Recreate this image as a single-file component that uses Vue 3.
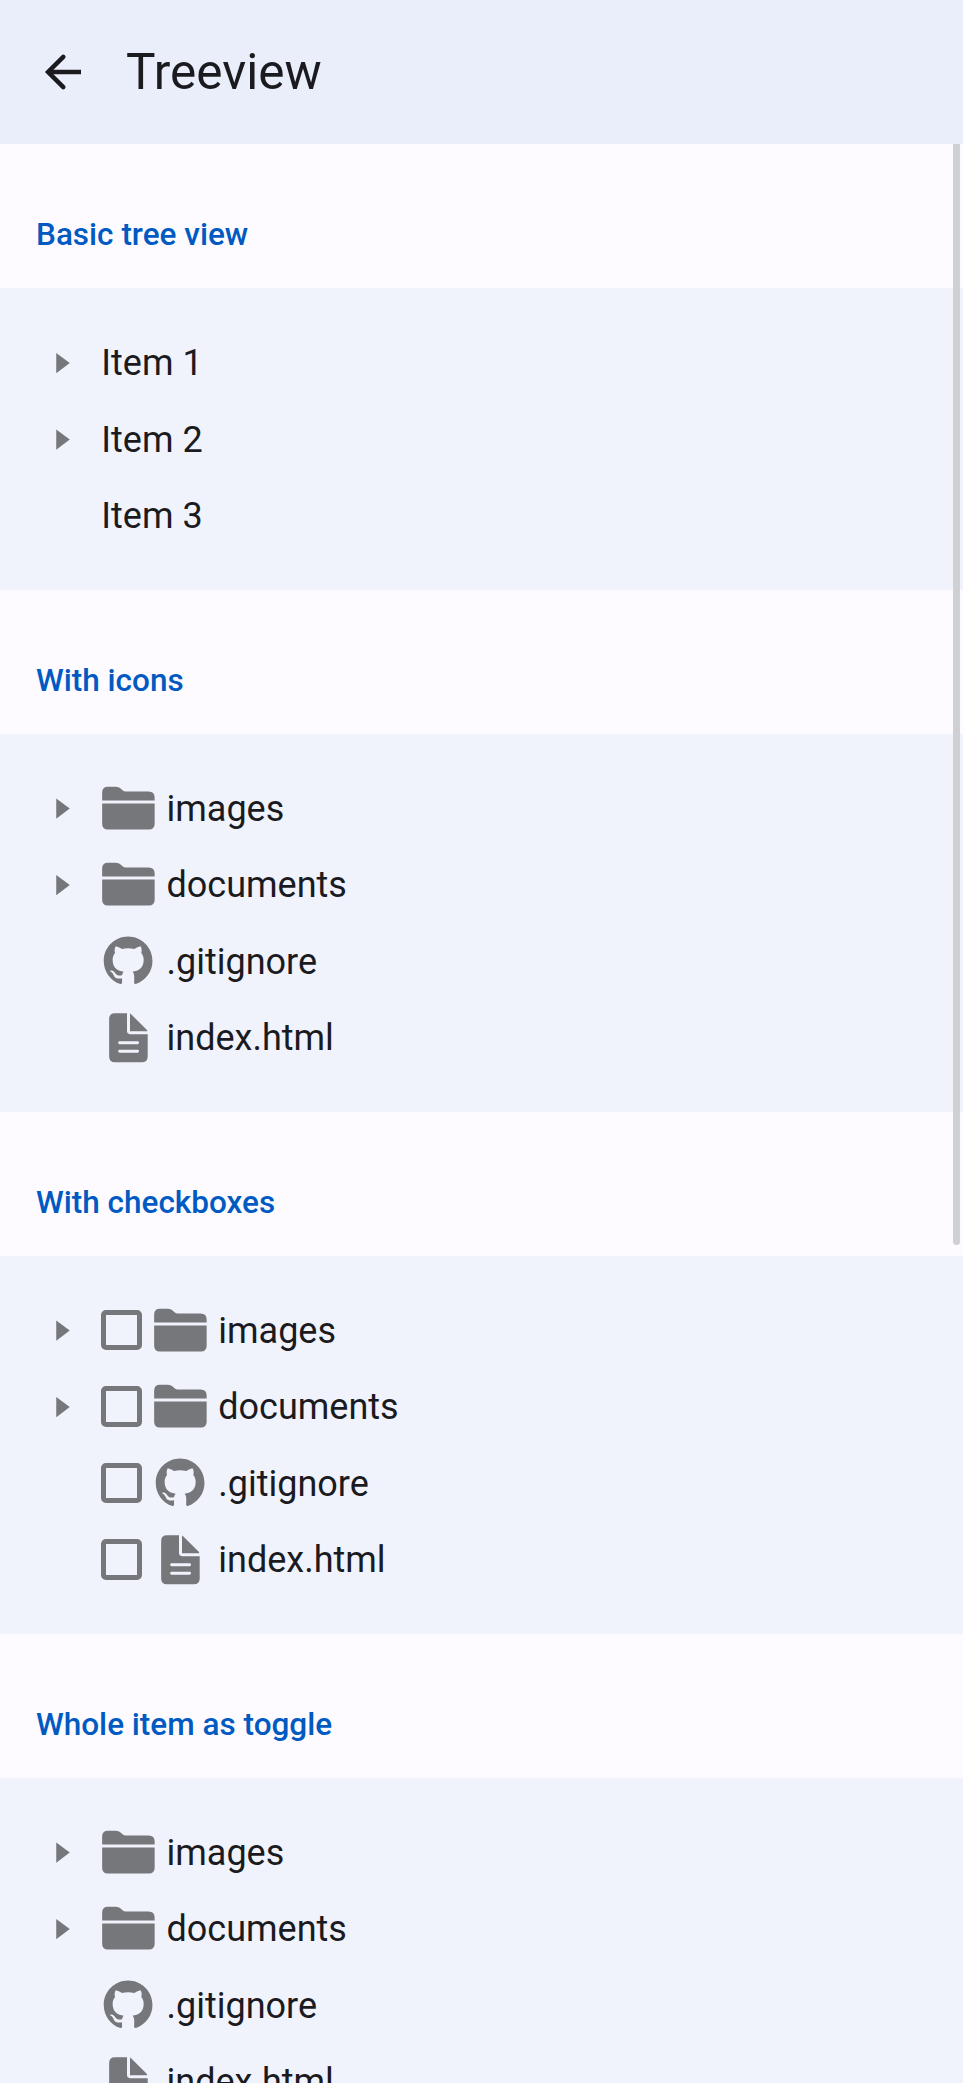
<script setup>
const files = [
  { label: 'images', icon: 'folder', toggle: true },
  { label: 'documents', icon: 'folder', toggle: true },
  { label: '.gitignore', icon: 'github' },
  { label: 'index.html', icon: 'file' },
]

const sections = [
  {
    title: 'Basic tree view',
    items: [
      { label: 'Item 1', toggle: true },
      { label: 'Item 2', toggle: true },
      { label: 'Item 3' },
    ],
  },
  { title: 'With icons', items: files },
  { title: 'With checkboxes', items: files, checkbox: true },
  { title: 'Whole item as toggle', items: files },
]
</script>

<template>
  <div class="page">
    <header class="navbar">
      <svg class="back" viewBox="0 0 54 54">
        <path stroke-linecap="round" d="M27.3 11.800L12.100 27L27.300 42.200" />
        <path d="M14 27H45" />
      </svg>
      <h1 class="title">Treeview</h1>
    </header>
    <main class="content">
      <section v-for="section in sections" :key="section.title">
        <h2 class="block-title">{{ section.title }}</h2>
        <div class="block">
          <div v-for="item in section.items" :key="item.label" class="row">
            <span class="toggle"><i v-if="item.toggle" class="arrow"></i></span>
            <span v-if="section.checkbox" class="checkbox"></span>
            <svg v-if="item.icon === 'folder'" class="icon" viewBox="-.4 -.4 54 54">
              <path d="M.75 19V11.200Q.75 5.250 6.500 5.250H14.500Q17.400 5.250 19.500 7.300L20.900 8.700Q22.400 10.200 24.700 10.200H47.200Q53.250 10.200 53.250 16.200V19Z" />
              <path d="M.75 22H53.250V42.400Q53.250 48.200 47.500 48.200H6.500Q.75 48.200 .75 42.400Z" />
            </svg>
            <svg v-else-if="item.icon === 'github'" class="icon" viewBox="-.4 -.4 54 54">
              <path
                transform="translate(2.350 2.150) scale(3.044)"
                d="M8 0C3.58 0 0 3.58 0 8c0 3.54 2.29 6.53 5.47 7.59.4.07.55-.17.55-.38 0-.19-.01-.82-.01-1.49-2.01.37-2.53-.49-2.69-.94-.09-.23-.48-.94-.82-1.13-.28-.15-.68-.52-.01-.53.63-.01 1.08.58 1.23.82.72 1.21 1.87.87 2.33.66.07-.52.28-.87.51-1.07-1.78-.2-3.64-.89-3.64-3.95 0-.87.31-1.59.82-2.15-.08-.2-.36-1.02.08-2.12 0 0 .67-.21 2.2.82.64-.18 1.32-.27 2-.27s1.36.09 2 .27c1.53-1.04 2.2-.82 2.2-.82.44 1.1.16 1.920.08 2.12.51.56.82 1.270.82 2.150 0 3.07-1.870 3.750-3.650 3.950.29.25.54.73.54 1.480 0 1.070-.01 1.930-.01 2.200 0 .21.15.46.55.38A8.013 8.013 0 0 0 16 8c0-4.420-3.580-8-8-8z"
              />
            </svg>
            <svg v-else-if="item.icon === 'file'" class="icon" viewBox="-.4 -.4 54 54">
              <path
                fill-rule="evenodd"
                d="M13.500 2.750H25.600V20.700Q25.600 23.750 28.600 23.750H46.300V46Q46.300 51.750 40.500 51.750H13.500Q7.750 51.750 7.750 46V8.500Q7.750 2.750 13.500 2.750ZM18.200 30.900A1.450 1.450 0 0 0 18.200 33.800H36.200A1.450 1.450 0 0 0 36.200 30.900ZM18.200 39.400A1.450 1.450 0 0 0 18.200 42.300H36.200A1.450 1.450 0 0 0 36.200 39.400Z"
              />
              <path d="M28.600 3.200Q29.400 3.500 30.200 4.300L44.600 18.700Q45.600 19.700 45.900 20.900H28.600Z" />
            </svg>
            <span class="label">{{ item.label }}</span>
          </div>
        </div>
      </section>
      <div class="scrollbar"></div>
    </main>
  </div>
</template>

<style>
body {
  margin: 0;
  background: #fdfbff;
}
</style>

<style scoped>
.page {
  height: 2083px;
  overflow: hidden;
  display: flex;
  flex-direction: column;
  background: #fdfbff;
  color: #1b1b1f;
  font-family: Roboto, "Liberation Sans", sans-serif;
  font-size: 36px;
}
.navbar {
  flex: none;
  height: 144px;
  box-sizing: border-box;
  padding-left: 36px;
  display: flex;
  align-items: center;
  gap: 36px;
  background: #e9eefa;
}
.back {
  width: 54px;
  height: 54px;
  fill: none;
  stroke: currentColor;
  stroke-width: 4.5px;
}
.title {
  margin: 0;
  padding-top: 2px;
  font-size: 49.5px;
  font-weight: 400;
  line-height: 1;
}
.content {
  position: relative;
  flex: 1;
  min-height: 0;
  overflow: hidden;
}
.block-title {
  margin: 0;
  height: 144px;
  box-sizing: border-box;
  padding: 73px 36px 35px;
  font-size: 31.5px;
  font-weight: 500;
  line-height: 36px;
  color: #005ac1;
}
.block {
  padding: 36px;
  background: #f0f3fc;
}
.row {
  height: 76.5px;
  display: flex;
  align-items: center;
  gap: 11.25px;
}
.toggle {
  width: 54px;
  padding-top: 1.5px;
  display: flex;
  justify-content: center;
}
.arrow {
  width: 13.5px;
  height: 20.25px;
  background: #76777b;
  clip-path: polygon(0 0, 100% 50%, 0 100%);
}
.checkbox {
  width: 40.5px;
  height: 40.5px;
  box-sizing: border-box;
  border: 5px solid #76777b;
  border-radius: 5px;
}
.icon {
  width: 54px;
  height: 54px;
  fill: #76777b;
}
.label {
  padding-top: 2px;
  line-height: 54px;
}
.scrollbar {
  position: absolute;
  top: 0;
  right: 3px;
  width: 7px;
  height: 1101px;
  border-radius: 0 0 4px 4px;
  background: #cfd0d4;
}
</style>
